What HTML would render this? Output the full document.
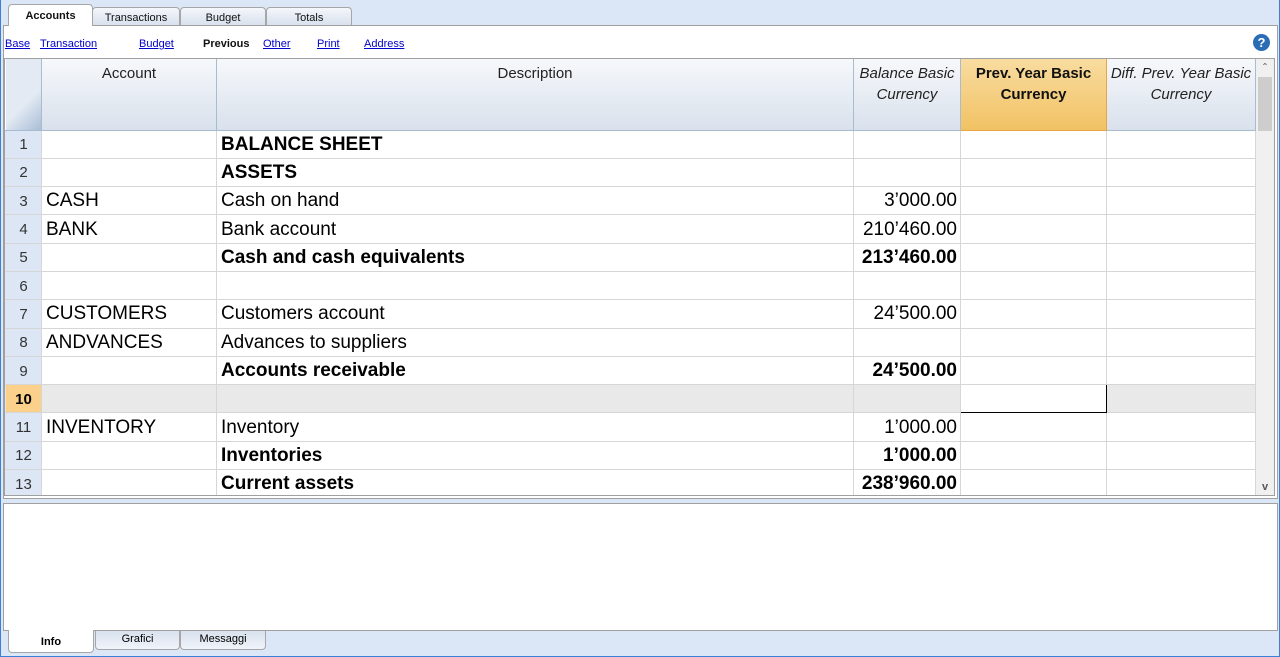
<!DOCTYPE html>
<html><head><meta charset="utf-8"><style>
*{box-sizing:border-box;margin:0;padding:0}
body{width:1280px;height:657px;overflow:hidden;background:#dbe6f7;font-family:"Liberation Sans",sans-serif;position:relative}
.win{position:absolute;left:0;top:0;width:1280px;height:657px;border:1px solid #3c7fd6;border-top:none}
.tab{position:absolute;height:18px;border:1px solid #a6a6a6;border-bottom:none;border-radius:4px 4px 0 0;background:linear-gradient(#f4f7fb,#d8e1ee);font-size:11px;text-align:center;line-height:20px;color:#111}
.tab.on{background:#fff;font-weight:bold;height:22px;line-height:22px}
.main{position:absolute;left:3px;top:25px;width:1275px;height:474px;background:#fff;border:1px solid #a0a0a0}
.links{position:absolute;left:5px;top:38px;font-size:11px}
.links a{position:absolute;color:#00c;text-decoration:underline;white-space:nowrap}
.grid{position:absolute;left:4px;top:58px;width:1271px;height:438px;border:1px solid #a0a0a0;overflow:hidden;background:#fff}
table{border-collapse:collapse;table-layout:fixed;width:1250px}
td{border:1px solid #d6d6d6;font-size:19px;white-space:nowrap;overflow:hidden;padding:1px 4px 0;height:28.3px;color:#000}
th{height:71px;vertical-align:top;font-weight:normal;font-size:15px;line-height:21px;padding-top:4px;color:#222;background:linear-gradient(#f6f8fb,#d9e1ec);border-right:1px solid #a9bccf;border-bottom:1px solid #a9bccf;white-space:nowrap}
th i{font-style:italic}
td.n{background:#dce6f4;color:#333;font-size:15px;text-align:center;border-color:#dce6f4 #d6d6d6 #d6d6d6 #dce6f4}
td.r{text-align:right;padding-right:3px}
.b{font-weight:bold}
tr.sel td{background:#e9e9e9}
tr.sel td.n{background:#fbd08a;font-weight:bold;color:#000}
.sb{position:absolute;left:1251px;top:0;width:18px;height:436px;background:#f0f0f0}
.bot{position:absolute;left:3px;top:503px;width:1275px;height:128px;background:#fff;border:1px solid #a0a0a0}
.bt{position:absolute;height:19px;border:1px solid #a6a6a6;border-top:none;border-radius:0 0 4px 4px;background:linear-gradient(#d8e1ee,#f0f4fa);font-size:11px;text-align:center;line-height:17px}
</style></head><body>
<div class="win"></div>
<div class="tab" style="left:92px;top:7px;width:88px">Transactions</div>
<div class="tab" style="left:180px;top:7px;width:86px">Budget</div>
<div class="tab" style="left:266px;top:7px;width:86px">Totals</div>
<div class="main"></div>
<div class="tab on" style="left:8px;top:4px;width:85px">Accounts</div>
<div class="links">
<a style="left:0">Base</a><a style="left:35px">Transaction</a><a style="left:134px">Budget</a>
<b style="position:absolute;left:198px;color:#111">Previous</b><a style="left:258px">Other</a><a style="left:312px">Print</a><a style="left:359px">Address</a>
</div>
<div style="position:absolute;left:1253px;top:34px;width:17px;height:17px;border-radius:50%;background:#2a6db5;color:#fff;font-weight:bold;font-size:13px;text-align:center;line-height:17px">?</div>
<div class="grid">
<table>
<colgroup><col style="width:36px"><col style="width:175px"><col style="width:637px"><col style="width:107px"><col style="width:146px"><col style="width:149px"></colgroup>
<tr><th style="background:linear-gradient(135deg,#e3eaf4 60%,#a9bdd6)"></th><th>Account</th><th>Description</th><th><i>Balance Basic<br>Currency</i></th><th style="background:linear-gradient(#f9dca0,#f1c264);font-weight:bold;color:#111;border-right-color:#e9a443;border-bottom-color:#e9a443">Prev. Year Basic<br>Currency</th><th><i>Diff. Prev. Year Basic<br>Currency</i></th></tr>
<tr><td class="n">1</td><td></td><td class="b">BALANCE SHEET</td><td></td><td></td><td></td></tr>
<tr><td class="n">2</td><td></td><td class="b">ASSETS</td><td></td><td></td><td></td></tr>
<tr><td class="n">3</td><td>CASH</td><td>Cash on hand</td><td class="r">3’000.00</td><td></td><td></td></tr>
<tr><td class="n">4</td><td>BANK</td><td>Bank account</td><td class="r">210’460.00</td><td></td><td></td></tr>
<tr><td class="n">5</td><td></td><td class="b">Cash and cash equivalents</td><td class="r b">213’460.00</td><td></td><td></td></tr>
<tr><td class="n">6</td><td></td><td></td><td></td><td></td><td></td></tr>
<tr><td class="n">7</td><td>CUSTOMERS</td><td>Customers account</td><td class="r">24’500.00</td><td></td><td></td></tr>
<tr><td class="n">8</td><td>ANDVANCES</td><td>Advances to suppliers</td><td></td><td></td><td></td></tr>
<tr><td class="n">9</td><td></td><td class="b">Accounts receivable</td><td class="r b">24’500.00</td><td></td><td></td></tr>
<tr class="sel"><td class="n">10</td><td></td><td></td><td></td><td style="background:#fff;border:1px solid #000"></td><td></td></tr>
<tr><td class="n">11</td><td>INVENTORY</td><td>Inventory</td><td class="r">1’000.00</td><td></td><td></td></tr>
<tr><td class="n">12</td><td></td><td class="b">Inventories</td><td class="r b">1’000.00</td><td></td><td></td></tr>
<tr><td class="n">13</td><td></td><td class="b">Current assets</td><td class="r b">238’960.00</td><td></td><td></td></tr>
</table>
<div class="sb"><div style="text-align:center;font-size:12px;color:#555;height:18px;line-height:18px">&#710;</div><div style="margin:0 2px;height:54px;background:#cdcdcd"></div><div style="position:absolute;bottom:2px;width:18px;text-align:center;font-size:11px;color:#555;font-weight:bold">v</div></div>
</div>
<div class="bot"></div>
<div class="bt" style="left:95px;top:631px;width:85px">Grafici</div>
<div class="bt" style="left:180px;top:631px;width:86px">Messaggi</div>
<div class="bt" style="left:8px;top:630px;width:86px;height:23px;background:#fff;font-weight:bold;line-height:25px">Info</div>
</body></html>
